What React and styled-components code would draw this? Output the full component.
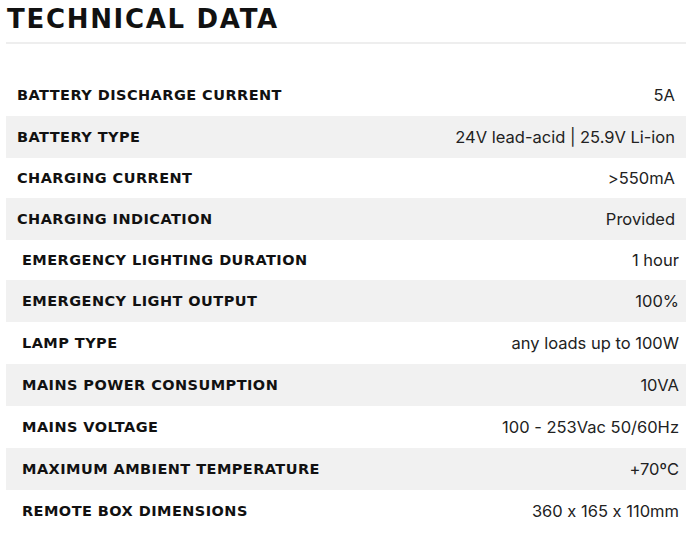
import React from "react";
import styled, { createGlobalStyle } from "styled-components";

const GlobalStyle = createGlobalStyle`
  body {
    margin: 0;
    background: #fff;
    font-family: "Inter", "Liberation Sans", sans-serif;
  }
`;

const Page = styled.div`
  width: 680px;
  padding: 0 0 0 6px;
`;

const Title = styled.h2`
  margin: 0;
  padding: 2px 0 0 1px;
  height: 40px;
  font-family: "DejaVu Sans", sans-serif;
  font-weight: 700;
  font-size: 26px;
  letter-spacing: 1.7px;
  line-height: 34px;
  color: #111;
  border-bottom: 2px solid #eeeeee;
`;

const Table = styled.div`
  display: flex;
  flex-direction: column;
  margin-top: 30px;
`;

const Row = styled.div`
  display: flex;
  align-items: center;
  justify-content: space-between;
  height: ${(p) => p.h}px;
  padding: 0 ${(p) => (p.wide ? 7 : 11)}px 0 ${(p) => (p.wide ? 16 : 11)}px;
  background: ${(p) => (p.shade ? "#f1f1f1" : "#fff")};
`;

const Label = styled.span`
  font-family: "DejaVu Sans", sans-serif;
  font-weight: 700;
  font-size: 14.5px;
  letter-spacing: 0.45px;
  color: #111;
  margin-top: -1px;
`;

const Value = styled.span`
  font-family: "Inter", sans-serif;
  font-size: 16.5px;
  font-feature-settings: "calt" 0;
  color: #222;
`;

const rows = [
  ["BATTERY DISCHARGE CURRENT", "5A", 42],
  ["BATTERY TYPE", "24V lead-acid | 25.9V Li-ion", 42],
  ["CHARGING CURRENT", ">550mA", 40],
  ["CHARGING INDICATION", "Provided", 42],
  ["EMERGENCY LIGHTING DURATION", "1 hour", 40],
  ["EMERGENCY LIGHT OUTPUT", "100%", 42],
  ["LAMP TYPE", "any loads up to 100W", 42],
  ["MAINS POWER CONSUMPTION", "10VA", 42],
  ["MAINS VOLTAGE", "100 - 253Vac 50/60Hz", 42],
  ["MAXIMUM AMBIENT TEMPERATURE", "+70ºC", 42],
  ["REMOTE BOX DIMENSIONS", "360 x 165 x 110mm", 42],
];

export default function App() {
  return (
    <Page>
      <GlobalStyle />
      <Title>TECHNICAL DATA</Title>
      <Table>
        {rows.map(([label, value, h], i) => (
          <Row key={label} h={h} shade={i % 2 === 1} wide={i >= 4}>
            <Label>{label}</Label>
            <Value>{value}</Value>
          </Row>
        ))}
      </Table>
    </Page>
  );
}
